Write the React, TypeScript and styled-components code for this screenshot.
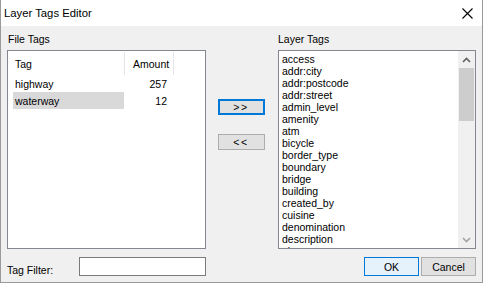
import styled, { createGlobalStyle } from 'styled-components';

const GlobalStyle = createGlobalStyle`
  html, body {
    margin: 0;
    padding: 0;
    background: #ffffff;
  }
  body {
    font-family: 'Liberation Sans', Arial, sans-serif;
    font-size: 10.5px;
    color: #000000;
  }
`;

const Window = styled.div`
  width: 483px;
  height: 283px;
  box-sizing: border-box;
  border: 1px solid #9a9a9a;
  border-top: none;
  display: flex;
  flex-direction: column;
  background: #f0f0f0;
`;

const TitleBar = styled.div`
  height: 26px;
  flex: none;
  background: #ffffff;
  display: flex;
  align-items: center;
  justify-content: space-between;
  padding: 0 9px 0 3px;
`;

const Title = styled.span`
  font-size: 11.3px;
`;

const Body = styled.div`
  flex: 1;
  display: grid;
  grid-template-columns: 199px 72px 198px;
  grid-template-rows: 13px 199px 19px;
  row-gap: 4px;
  padding: 7px 6px 0 6px;
`;

const Label = styled.div`
  line-height: 13px;
  white-space: nowrap;
`;

type BottomRowProps = { align: 'space-between' | 'flex-end' };

const BottomRow = styled.div<BottomRowProps>`
  margin-top: 8px;
  display: flex;
  align-items: center;
  justify-content: ${(props) => props.align};
`;

const FilterLabel = styled.span`
  padding-top: 7px;
`;

const FilterInput = styled.input`
  width: 127px;
  height: 19px;
  box-sizing: border-box;
  border: 1px solid #7a7a7a;
  background: #ffffff;
  outline: none;
`;

const ListBox = styled.div`
  box-sizing: border-box;
  border: 1px solid #828790;
  background: #ffffff;
  overflow: hidden;
  position: relative;
`;

const Header = styled.div`
  display: grid;
  grid-template-columns: 117px 49px;
  height: 24px;
  padding-top: 1px;
  box-sizing: border-box;
`;

const HeaderCell = styled.div<{ pad: number }>`
  border-right: 1px solid #e5e5e5;
  display: flex;
  align-items: center;
  padding-left: ${(props) => props.pad}px;
`;

const Row = styled.div`
  display: grid;
  grid-template-columns: 117px 49px;
  height: 17px;
  align-items: stretch;
`;

type TagCellProps = { selected: boolean };

const TagCell = styled.div<TagCellProps>`
  margin-left: 5px;
  margin-right: 1px;
  padding-left: 2px;
  display: flex;
  align-items: center;
  background: ${(props) => (props.selected ? '#d9d9d9' : 'transparent')};
`;

const AmountCell = styled.div`
  display: flex;
  align-items: center;
  justify-content: flex-end;
  padding-right: 7px;
`;

const Middle = styled.div`
  display: flex;
  flex-direction: column;
  align-items: center;
  padding-top: 49px;
  padding-right: 2px;
  gap: 19px;
`;

type ButtonProps = { focused?: boolean };

const ArrowButton = styled.button<ButtonProps>`
  width: 47px;
  height: 16px;
  box-sizing: border-box;
  padding: 0;
  font-family: inherit;
  font-size: 10.5px;
  letter-spacing: 1.5px;
  background: #e1e1e1;
  border: ${(props) => (props.focused ? '2px solid #0078d7' : '1px solid #adadad')};
  color: #000000;
`;

const DialogButtons = styled.div`
  display: flex;
  gap: 2px;
`;

const DialogButton = styled.button<ButtonProps>`
  width: 55px;
  height: 19px;
  box-sizing: border-box;
  padding: 0;
  font-family: inherit;
  font-size: 10.5px;
  color: #000000;
  background: ${(props) => (props.focused ? '#e5f1fb' : '#e1e1e1')};
  border: 1px solid ${(props) => (props.focused ? '#0078d7' : '#adadad')};
`;

const LayerList = styled.div`
  padding: 2px 0 0 3px;
`;

const LayerItem = styled.div`
  height: 12px;
  line-height: 12px;
  white-space: nowrap;
`;

const ScrollBar = styled.div`
  position: absolute;
  top: 0;
  right: 0;
  bottom: 0;
  width: 17px;
  background: #f0f0f0;
  display: flex;
  flex-direction: column;
`;

const ScrollArrow = styled.div`
  height: 17px;
  display: flex;
  align-items: center;
  justify-content: center;
`;

const ScrollThumb = styled.div`
  height: 53px;
  margin: 0 1px;
  background: #cdcdcd;
`;

const ScrollTrack = styled.div`
  flex: 1;
`;

const Chevron = ({ up }: { up: boolean }) => (
  <svg width="9" height="6" viewBox="0 0 9 6">
    <path
      d={up ? 'M1 5 L4.5 1.5 L8 5' : 'M1 1 L4.5 4.5 L8 1'}
      fill="none"
      stroke={up ? '#606060' : '#a3a3a3'}
      strokeWidth="1.6"
    />
  </svg>
);

const fileTags = [
  { tag: 'highway', amount: 257, selected: false },
  { tag: 'waterway', amount: 12, selected: true },
];

const layerTags = [
  'access',
  'addr:city',
  'addr:postcode',
  'addr:street',
  'admin_level',
  'amenity',
  'atm',
  'bicycle',
  'border_type',
  'boundary',
  'bridge',
  'building',
  'created_by',
  'cuisine',
  'denomination',
  'description',
  'ele',
];

const App = () => {
  return (
    <>
      <GlobalStyle />
      <Window>
        <TitleBar>
          <Title>Layer Tags Editor</Title>
          <svg width="11" height="11" viewBox="0 0 11 11">
            <path d="M0.5 0.5 L10.5 10.5 M10.5 0.5 L0.5 10.5" stroke="#000" strokeWidth="1.1" />
          </svg>
        </TitleBar>
        <Body>
          <Label style={{ paddingLeft: 1 }}>File Tags</Label>
          <div />
          <Label>Layer Tags</Label>

          <ListBox>
            <Header>
              <HeaderCell pad={7}>Tag</HeaderCell>
              <HeaderCell pad={8}>Amount</HeaderCell>
            </Header>
            {fileTags.map((row) => (
              <Row key={row.tag}>
                <TagCell selected={row.selected}>{row.tag}</TagCell>
                <AmountCell>{row.amount}</AmountCell>
              </Row>
            ))}
          </ListBox>

          <Middle>
            <ArrowButton focused>&gt;&gt;</ArrowButton>
            <ArrowButton>&lt;&lt;</ArrowButton>
          </Middle>

          <ListBox>
            <LayerList>
              {layerTags.map((tag) => (
                <LayerItem key={tag}>{tag}</LayerItem>
              ))}
            </LayerList>
            <ScrollBar>
              <ScrollArrow>
                <Chevron up />
              </ScrollArrow>
              <ScrollThumb />
              <ScrollTrack />
              <ScrollArrow>
                <Chevron up={false} />
              </ScrollArrow>
            </ScrollBar>
          </ListBox>

          <BottomRow align="space-between">
            <FilterLabel>Tag Filter:</FilterLabel>
            <FilterInput />
          </BottomRow>
          <div />
          <BottomRow align="flex-end">
            <DialogButtons>
              <DialogButton focused>OK</DialogButton>
              <DialogButton>Cancel</DialogButton>
            </DialogButtons>
          </BottomRow>
        </Body>
      </Window>
    </>
  );
};

export default App;
